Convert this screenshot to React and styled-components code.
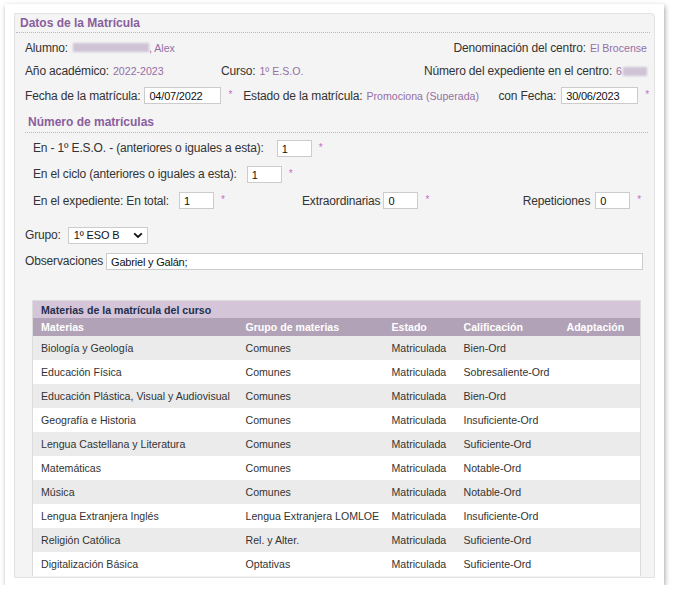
import React from 'react';
import styled, { createGlobalStyle } from 'styled-components';

const GlobalStyle = createGlobalStyle`
  html, body {
    margin: 0;
    padding: 0;
    background: #ffffff;
  }
  body {
    font-family: 'Liberation Sans', Arial, sans-serif;
    color: #333333;
  }
`;

const Card = styled.div`
  box-sizing: border-box;
  margin: 4px 0 0 5px;
  width: 659px;
  height: 581px;
  padding: 9px 9px 7px 9px;
  background: #ffffff;
  box-shadow: 1px 2px 5px rgba(0, 0, 0, 0.35);
`;

const Panel = styled.div`
  box-sizing: border-box;
  height: 100%;
  background: #f4f4f4;
  border: 1px solid #e2e2e2;
  border-radius: 0 4px 0 0;
  overflow: hidden;
`;

const Title = styled.div`
  margin: 0 4px 0 1px;
  padding-left: 4px;
  height: 18px;
  line-height: 18px;
  font-size: 12px;
  font-weight: bold;
  color: #8a5e9e;
  border-bottom: 1px dotted #cfa9db;
`;

const SubTitle = styled(Title)`
  margin: 0 6px 0 10px;
  padding-left: 3px;
  height: 22px;
  line-height: 25px;
`;

const Row = styled.div`
  display: flex;
  align-items: center;
  height: ${(p) => p.$h || 24}px;
  margin-top: ${(p) => p.$mt || 0}px;
  padding-left: ${(p) => p.$pl || 10}px;
  padding-right: ${(p) => p.$pr || 7}px;
  font-size: 12px;
  letter-spacing: -0.15px;
  white-space: nowrap;
`;

const Label = styled.span`
  color: #333333;
  margin-left: ${(p) => p.$ml || 0}px;
`;

const Value = styled.span`
  color: #946fa4;
  font-size: 10.6px;
  letter-spacing: 0;
  margin-left: ${(p) => p.$ml ?? 4}px;
`;

const Blur = styled.span`
  display: inline-block;
  width: ${(p) => p.$w}px;
  height: 9px;
  margin-left: ${(p) => p.$ml || 0}px;
  background: #cfc4d6;
  filter: blur(1.2px);
  vertical-align: middle;
`;

const Push = styled.div`
  margin-left: auto;
  display: flex;
  align-items: center;
`;

const Cell = styled.div`
  display: flex;
  align-items: center;
  width: ${(p) => (p.$w ? `${p.$w}px` : 'auto')};
  flex: none;
`;

const Field = styled.input`
  box-sizing: border-box;
  width: ${(p) => p.$w}px;
  height: ${(p) => p.$h || 17}px;
  margin-left: ${(p) => p.$ml || 5}px;
  padding: 1px 4px 0;
  border: 1px solid #cccccc;
  background: #ffffff;
  font-family: 'Liberation Sans', Arial, sans-serif;
  font-size: 11px;
  letter-spacing: -0.2px;
  color: #111111;
  outline: none;
  flex: ${(p) => (p.$grow ? 1 : 'none')};
  margin-right: ${(p) => p.$mr || 0}px;
`;

const Req = styled.span`
  color: #c46fc8;
  font-size: 10px;
  margin-left: ${(p) => p.$ml || 7}px;
  position: relative;
  top: -1px;
`;

const SelectBox = styled.div`
  box-sizing: border-box;
  display: flex;
  align-items: center;
  justify-content: space-between;
  width: 80px;
  height: 17px;
  margin-left: 7px;
  padding: 0 4px 0 5px;
  border: 1px solid #cccccc;
  background: #ffffff;
  font-size: 11px;
  color: #111111;
`;

const TableWrap = styled.div`
  margin: 26px 14px 0 17px;
`;

const Table = styled.table`
  width: 608px;
  border-collapse: collapse;
  table-layout: fixed;
  font-size: 10.6px;
  border: 1px solid #dcdcdc;
  border-bottom: none;
`;

const Caption = styled.th`
  height: 17px;
  line-height: 12px;
  padding: 0 0 0 8px;
  background: #d4c5d8;
  color: #1f2f4d;
  font-weight: bold;
  text-align: left;
`;

const HeadCell = styled.th`
  height: 18px;
  line-height: 12px;
  padding: 0 0 0 8px;
  background: #b2a2b7;
  color: #ffffff;
  font-weight: bold;
  text-align: left;
`;

const BodyRow = styled.tr`
  background: ${(p) => (p.$odd ? '#ebebeb' : '#ffffff')};
`;

const BodyCell = styled.td`
  height: 24px;
  line-height: 12px;
  padding: 0 0 0 8px;
  color: #333333;
  white-space: nowrap;
`;

const Chevron = () => (
  <svg width="10" height="7" viewBox="0 0 10 7">
    <path d="M1.2 1.3 L5 5 L8.8 1.3" fill="none" stroke="#111" strokeWidth="1.8" />
  </svg>
);

const materias = [
  ['Biología y Geología', 'Comunes', 'Matriculada', 'Bien-Ord'],
  ['Educación Física', 'Comunes', 'Matriculada', 'Sobresaliente-Ord'],
  ['Educación Plástica, Visual y Audiovisual', 'Comunes', 'Matriculada', 'Bien-Ord'],
  ['Geografía e Historia', 'Comunes', 'Matriculada', 'Insuficiente-Ord'],
  ['Lengua Castellana y Literatura', 'Comunes', 'Matriculada', 'Suficiente-Ord'],
  ['Matemáticas', 'Comunes', 'Matriculada', 'Notable-Ord'],
  ['Música', 'Comunes', 'Matriculada', 'Notable-Ord'],
  ['Lengua Extranjera Inglés', 'Lengua Extranjera LOMLOE', 'Matriculada', 'Insuficiente-Ord'],
  ['Religión Católica', 'Rel. y Alter.', 'Matriculada', 'Suficiente-Ord'],
  ['Digitalización Básica', 'Optativas', 'Matriculada', 'Suficiente-Ord'],
];

export default function App() {
  return (
    <>
      <GlobalStyle />
      <Card>
        <Panel>
          <Title>Datos de la Matrícula</Title>

          <Row $h={27} $mt={1}>
            <Label>Alumno:</Label>
            <Blur $w={76} $ml={5} />
            <Value $ml={0}>, Alex</Value>
            <Push>
              <Label>Denominación del centro:</Label>
              <Value>El Brocense</Value>
            </Push>
          </Row>

          <Row $h={20}>
            <Cell $w={196}>
              <Label>Año académico:</Label>
              <Value>2022-2023</Value>
            </Cell>
            <Cell>
              <Label>Curso:</Label>
              <Value>1º E.S.O.</Value>
            </Cell>
            <Push>
              <Label>Número del expediente en el centro:</Label>
              <Value>6</Value>
              <Blur $w={24} $ml={1} />
            </Push>
          </Row>

          <Row $h={29} $pr={5}>
            <Label>Fecha de la matrícula:</Label>
            <Field $w={77} $ml={4} defaultValue="04/07/2022" />
            <Req>*</Req>
            <Label $ml={11}>Estado de la matrícula:</Label>
            <Value>Promociona (Superada)</Value>
            <Push>
              <Label>con Fecha:</Label>
              <Field $w={77} $ml={5} defaultValue="30/06/2023" />
              <Req>*</Req>
            </Push>
          </Row>

          <SubTitle>Número de matrículas</SubTitle>

          <Row $h={26} $mt={2} $pl={18}>
            <Label>En - 1º E.S.O. - (anteriores o iguales a esta):</Label>
            <Field $w={35} $ml={13} defaultValue="1" />
            <Req>*</Req>
          </Row>

          <Row $h={26} $pl={18}>
            <Label>En el ciclo (anteriores o iguales a esta):</Label>
            <Field $w={35} $ml={10} defaultValue="1" />
            <Req>*</Req>
          </Row>

          <Row $h={27} $pl={18} $pr={13}>
            <Cell $w={269}>
              <Label>En el expediente: En total:</Label>
              <Field $w={35} $ml={10} defaultValue="1" />
              <Req>*</Req>
            </Cell>
            <Cell>
              <Label>Extraordinarias</Label>
              <Field $w={35} $ml={3} defaultValue="0" />
              <Req>*</Req>
            </Cell>
            <Push>
              <Label>Repeticiones</Label>
              <Field $w={35} $ml={5} defaultValue="0" />
              <Req>*</Req>
            </Push>
          </Row>

          <Row $h={26} $mt={8}>
            <Label>Grupo:</Label>
            <SelectBox>
              <span>1º ESO B</span>
              <Chevron />
            </SelectBox>
          </Row>

          <Row $h={26}>
            <Label>Observaciones</Label>
            <Field $w={100} $ml={3} $grow $mr={4} defaultValue="Gabriel y Galán;" />
          </Row>

          <TableWrap>
            <Table>
              <colgroup>
                <col style={{ width: 205 }} />
                <col style={{ width: 146 }} />
                <col style={{ width: 72 }} />
                <col style={{ width: 103 }} />
                <col style={{ width: 82 }} />
              </colgroup>
              <thead>
                <tr>
                  <Caption colSpan={5}>Materias de la matrícula del curso</Caption>
                </tr>
                <tr>
                  <HeadCell>Materias</HeadCell>
                  <HeadCell>Grupo de materias</HeadCell>
                  <HeadCell>Estado</HeadCell>
                  <HeadCell>Calificación</HeadCell>
                  <HeadCell>Adaptación</HeadCell>
                </tr>
              </thead>
              <tbody>
                {materias.map((m, i) => (
                  <BodyRow key={m[0]} $odd={i % 2 === 0}>
                    <BodyCell>{m[0]}</BodyCell>
                    <BodyCell>{m[1]}</BodyCell>
                    <BodyCell>{m[2]}</BodyCell>
                    <BodyCell>{m[3]}</BodyCell>
                    <BodyCell />
                  </BodyRow>
                ))}
              </tbody>
            </Table>
          </TableWrap>
        </Panel>
      </Card>
    </>
  );
}
